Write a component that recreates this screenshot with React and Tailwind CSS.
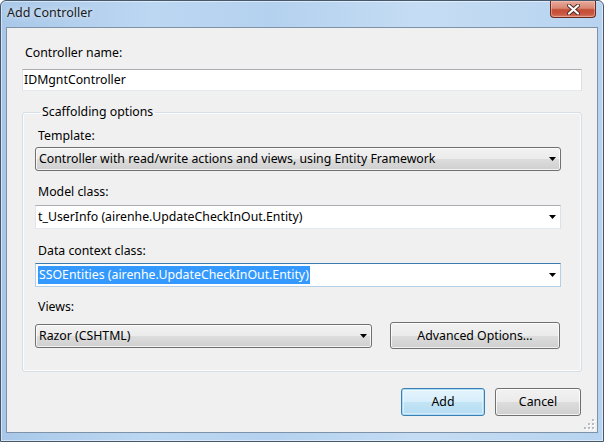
import React from "react";

const btnGray =
  "rounded-[3px] border border-[#707070] bg-[linear-gradient(#f2f2f2_0%,#ebebeb_50%,#dddddd_50%,#cfcfcf_100%)] shadow-[inset_0_0_0_1px_rgba(255,255,255,0.75)]";

function Arrow() {
  return (
    <svg width="7" height="4" viewBox="0 0 7 4" className="shrink-0">
      <polygon points="0,0 7,0 3.5,4" fill="#000" />
    </svg>
  );
}

function DropList({ value, className = "" }) {
  return (
    <div className={`flex h-[24px] items-center justify-between pl-[3px] pr-[4px] ${btnGray} ${className}`}>
      <span className="leading-[16px]">{value}</span>
      <Arrow />
    </div>
  );
}

function EditCombo({ children, focused = false }) {
  const border = focused
    ? "border-[#b5cfe7] border-t-[#3d7bad]"
    : "border-[#e3e9ef] border-t-[#abadb3] border-l-[#e2e3ea] border-r-[#dbdfe6]";
  return (
    <div className={`flex h-[24px] items-center justify-between border bg-white pl-[2px] pr-[4px] ${border}`}>
      {children}
      <Arrow />
    </div>
  );
}

function Label({ children, className = "" }) {
  return <div className={`h-[16px] pl-[3px] leading-[16px] ${className}`}>{children}</div>;
}

function CloseButton() {
  return (
    <div className="flex h-[17px] w-[46px] items-center justify-center rounded-b-[4px] border border-t-0 border-[#6b2a20] bg-[linear-gradient(#e9a99b_0%,#d98873_45%,#c44d36_55%,#c9563f_80%,#d57a62_100%)] shadow-[inset_0_0_0_1px_rgba(255,210,200,0.45)]">
      <svg width="13" height="11" viewBox="0 0 13 11">
        <path d="M2 1.5 L11 9.5 M11 1.5 L2 9.5" stroke="#4a2a26" strokeWidth="4" strokeLinecap="round" />
        <path d="M2 1.5 L11 9.5 M11 1.5 L2 9.5" stroke="#fff" strokeWidth="2.2" strokeLinecap="round" />
      </svg>
    </div>
  );
}

function Grip() {
  const dots = [
    [8, 0],
    [8, 4],
    [4, 4],
    [8, 8],
    [4, 8],
    [0, 8],
  ];
  return (
    <svg width="11" height="11" viewBox="0 0 11 11" className="absolute bottom-[2px] right-[2px]">
      {dots.map(([x, y]) => (
        <g key={`${x}-${y}`}>
          <rect x={x + 1} y={y + 1} width="2" height="2" fill="#fff" />
          <rect x={x} y={y} width="2" height="2" fill="#b6bcc6" />
        </g>
      ))}
    </svg>
  );
}

export default function App() {
  return (
    <div className="h-[443px] w-[606px] overflow-hidden bg-white font-['Noto_Sans','Liberation_Sans',sans-serif] text-[12.3px] text-black">
      <div className="flex h-[442px] w-[604px] flex-col rounded-t-[6px] border border-[#46586b] bg-[linear-gradient(90deg,#a9c8e9_0%,#bcd7f2_25%,#b4d1ef_45%,#c5ddf4_70%,#b7d3ef_100%)] px-[5px] pb-[8px] shadow-[inset_0_0_0_1px_rgba(255,255,255,0.5)]">
        {/* title bar */}
        <div className="flex h-[26px] shrink-0 items-start justify-between">
          <div className="pl-[1px] pt-[4px] text-[12.5px] leading-[16px] text-[#1b1b1b] [text-shadow:0_0_6px_rgba(255,255,255,0.9)]">
            Add Controller
          </div>
          <div className="mr-[2px]">
            <CloseButton />
          </div>
        </div>

        {/* client area */}
        <div className="relative flex flex-1 flex-col border border-[#7f93a8] bg-[#f0f0f0] px-[15px] pt-[17px]">
          <Label>Controller name:</Label>
          <div className="mt-[8px] flex h-[22px] items-center border border-[#e3e9ef] border-t-[#abadb3] border-l-[#e2e3ea] border-r-[#dbdfe6] bg-white pl-[1px]">
            <span className="leading-[16px]">IDMgntController</span>
          </div>

          <fieldset className="mt-[13px] rounded-[3px] border border-[#d5dfe5] pb-[22px] pl-[12px] pr-[20px] shadow-[inset_0_0_0_1px_#fafbfc]">
            <legend className="ml-[5px] px-[2px] leading-[16px]">Scaffolding options</legend>

            <Label className="mt-[8px]">Template:</Label>
            <DropList className="mt-[3px]" value="Controller with read/write actions and views, using Entity Framework" />

            <Label className="mt-[13px]">Model class:</Label>
            <div className="mt-[5px]">
              <EditCombo>
                <span className="leading-[16px]">t_UserInfo (airenhe.UpdateCheckInOut.Entity)</span>
              </EditCombo>
            </div>

            <Label className="mt-[14px]">Data context class:</Label>
            <div className="mt-[4px]">
              <EditCombo focused>
                <span className="bg-[#3399ff] px-[1px] leading-[18px] text-white">
                  SSOEntities (airenhe.UpdateCheckInOut.Entity)
                </span>
              </EditCombo>
            </div>

            <Label className="mt-[12px]">Views:</Label>
            <div className="mt-[7px] flex items-center gap-[18px]">
              <DropList className="w-[337px]" value="Razor (CSHTML)" />
              <button className={`h-[27px] w-[170px] leading-[16px] ${btnGray}`}>Advanced Options...</button>
            </div>
          </fieldset>

          <div className="mt-[16px] flex justify-end gap-[10px] pr-[1px]">
            <button className="h-[28px] w-[84px] rounded-[3px] border border-[#3c7fb1] bg-[linear-gradient(#e5f4fc_0%,#d6eefb_50%,#c2e4f6_50%,#b6dcf1_100%)] leading-[16px] shadow-[inset_0_0_0_1px_#a8dcf7,inset_0_0_0_2px_rgba(255,255,255,0.45)]">
              Add
            </button>
            <button className={`h-[28px] w-[86px] leading-[16px] ${btnGray}`}>Cancel</button>
          </div>

          <Grip />
        </div>
      </div>
    </div>
  );
}
